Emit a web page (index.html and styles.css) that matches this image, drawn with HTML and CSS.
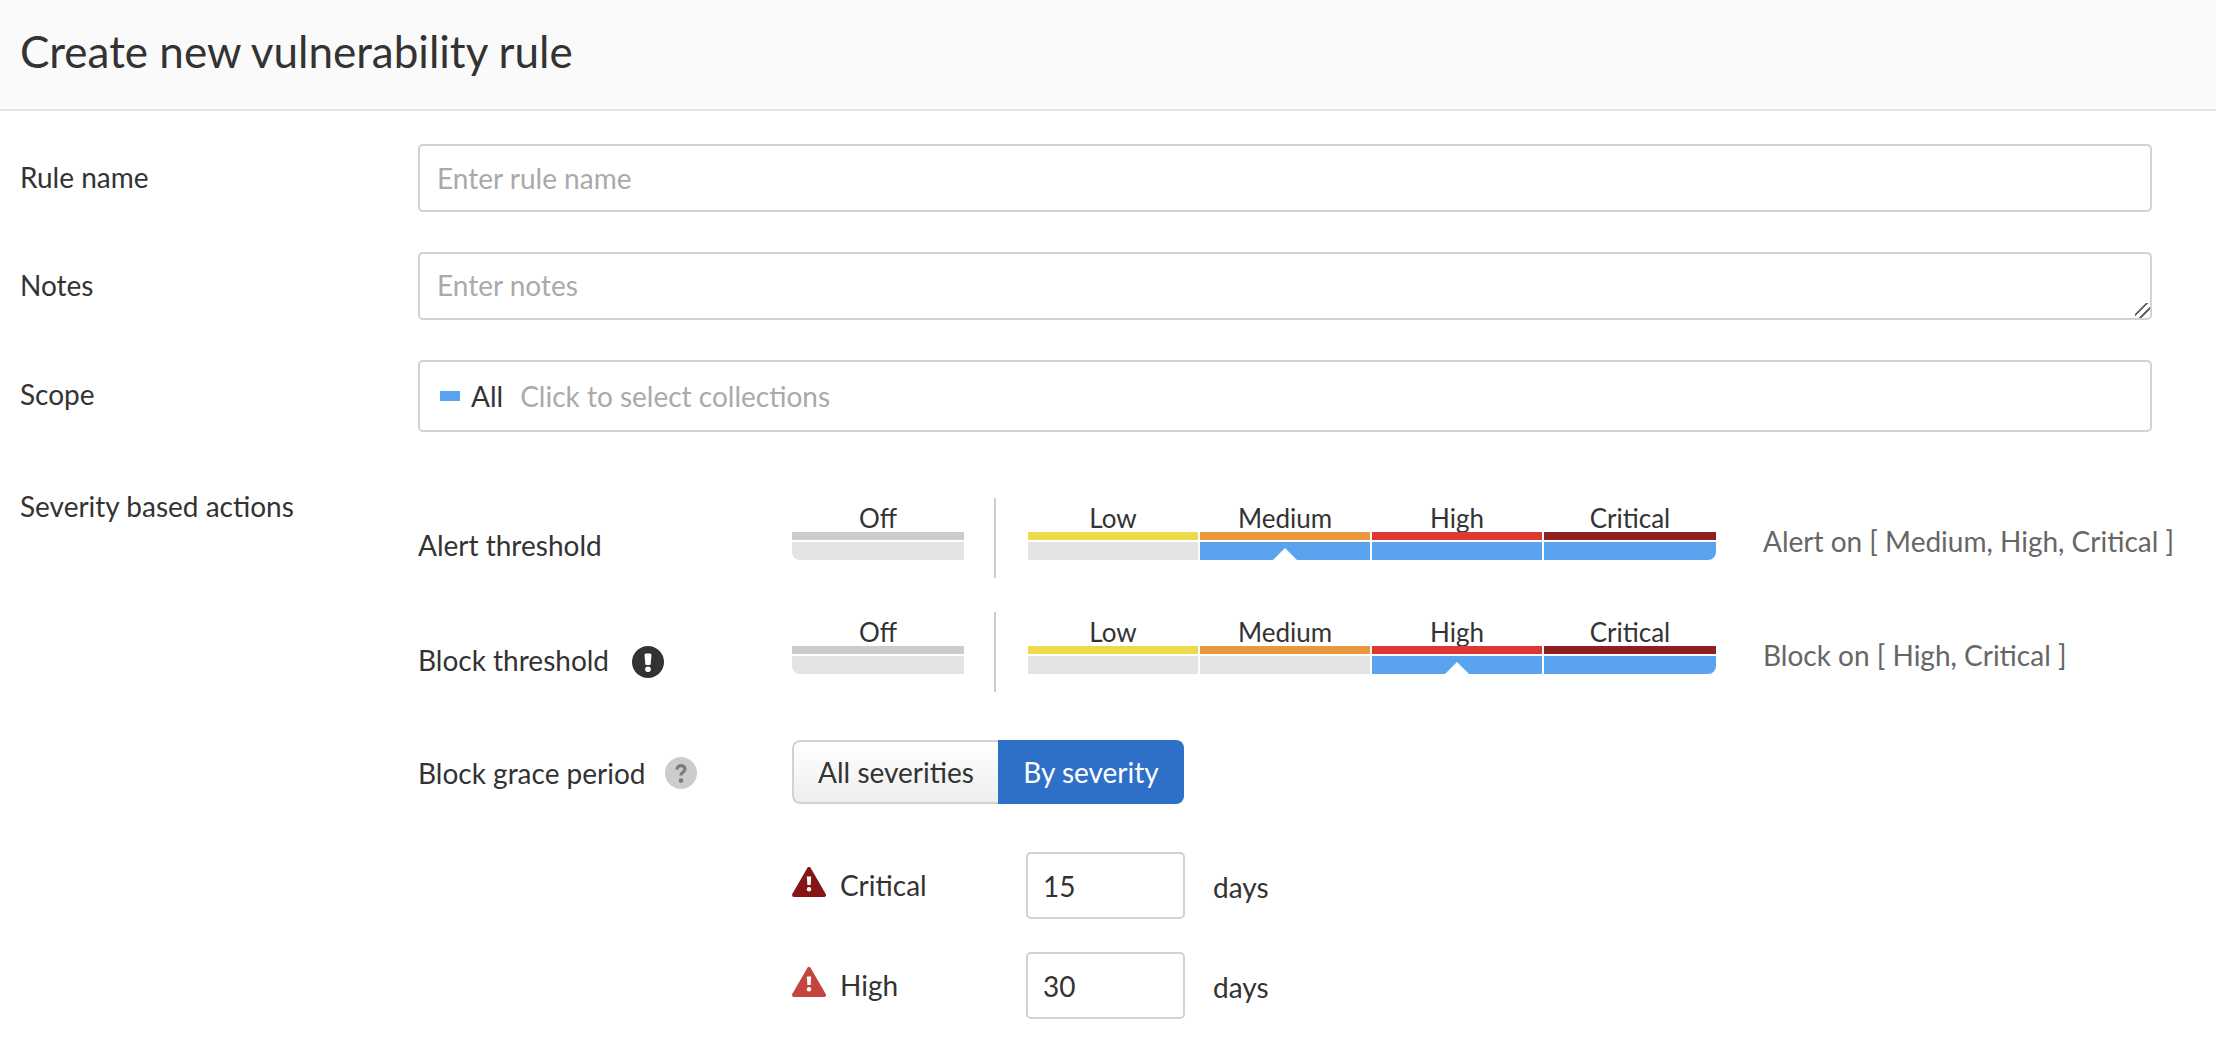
FILE: index.html
```html
<!DOCTYPE html>
<html lang="en">
<head>
<meta charset="utf-8">
<title>Create new vulnerability rule</title>
<link rel="stylesheet" href="styles.css">
</head>
<body>
<header class="page-header"><h1 class="page-title">Create new vulnerability rule</h1></header>
<main class="form">
  <div class="field">
    <label class="field-label">Rule name</label>
    <input class="text-input" type="text" placeholder="Enter rule name">
  </div>
  <div class="field">
    <label class="field-label">Notes</label>
    <textarea class="text-input text-area" placeholder="Enter notes"></textarea>
  </div>
  <div class="field">
    <label class="field-label field-label-scope">Scope</label>
    <div class="text-input scope-input">
      <span class="scope-swatch"></span><span class="scope-value">All</span><span class="scope-hint">Click to select collections</span>
    </div>
  </div>
  <div class="field severity">
    <div class="field-label severity-label">Severity based actions</div>
    <div class="severity-body">
      <div class="threshold">
        <div class="threshold-label threshold-label-alert">Alert threshold</div>
        <div class="scale scale-off">
          <div class="cell"><span class="cell-name">Off</span><span class="bar bar-off"></span><span class="state state-first"></span></div>
        </div>
        <div class="divider"></div>
        <div class="scale scale-levels">
          <div class="cell"><span class="cell-name">Low</span><span class="bar bar-low"></span><span class="state"></span></div>
          <div class="cell"><span class="cell-name">Medium</span><span class="bar bar-medium"></span><span class="state state-on state-marker"></span></div>
          <div class="cell"><span class="cell-name">High</span><span class="bar bar-high"></span><span class="state state-on"></span></div>
          <div class="cell"><span class="cell-name">Critical</span><span class="bar bar-critical"></span><span class="state state-on state-last"></span></div>
        </div>
        <div class="threshold-summary">Alert on [ Medium, High, Critical ]</div>
      </div>
      <div class="threshold">
        <div class="threshold-label threshold-label-block">Block threshold
          <svg class="icon-round icon-block" viewBox="0 0 32 32" aria-hidden="true"><circle cx="16" cy="16" r="16" fill="#333"/><path d="M12.500 9a1.500 1.500 0 0 1 1.500-1.500h4a1.500 1.500 0 0 1 1.500 1.500l-.8 9a1 1 0 0 1-1 1h-3.400a1 1 0 0 1-1-1z" fill="#fff"/><circle cx="16" cy="23.200" r="2.800" fill="#fff"/></svg>
        </div>
        <div class="scale scale-off">
          <div class="cell"><span class="cell-name">Off</span><span class="bar bar-off"></span><span class="state state-first"></span></div>
        </div>
        <div class="divider"></div>
        <div class="scale scale-levels">
          <div class="cell"><span class="cell-name">Low</span><span class="bar bar-low"></span><span class="state"></span></div>
          <div class="cell"><span class="cell-name">Medium</span><span class="bar bar-medium"></span><span class="state"></span></div>
          <div class="cell"><span class="cell-name">High</span><span class="bar bar-high"></span><span class="state state-on state-marker"></span></div>
          <div class="cell"><span class="cell-name">Critical</span><span class="bar bar-critical"></span><span class="state state-on state-last"></span></div>
        </div>
        <div class="threshold-summary">Block on [ High, Critical ]</div>
      </div>
      <div class="grace">
        <div class="grace-label">Block grace period
          <svg class="icon-round" viewBox="0 0 32 32" aria-hidden="true"><circle cx="16" cy="16" r="16" fill="#ccc"/><path d="M12 12.500c0-2.500 1.800-3.900 4-3.900s4 1.300 4 3.500c0 3-4 3-4 6.400" fill="none" stroke="#7c7c7c" stroke-width="3.200"/><circle cx="16" cy="23.600" r="2.300" fill="#7c7c7c"/></svg>
        </div>
        <div class="toggle">
          <span class="toggle-option">All severities</span>
          <span class="toggle-option toggle-active">By severity</span>
        </div>
      </div>
      <div class="days-row days-row-critical">
        <div class="days-name">
          <svg class="icon-tri" viewBox="0 0 34 30" aria-hidden="true"><path d="M17 2 32 28H2z" fill="#861616" stroke="#861616" stroke-width="4" stroke-linejoin="round"/><path d="M14.800 9.500h4.400l-.6 8.500h-3.200z" fill="#fff"/><circle cx="17" cy="22.200" r="2.200" fill="#fff"/></svg>
          <span>Critical</span>
        </div>
        <input class="text-input days-input" type="text" value="15">
        <span class="days-unit">days</span>
      </div>
      <div class="days-row">
        <div class="days-name">
          <svg class="icon-tri" viewBox="0 0 34 30" aria-hidden="true"><path d="M17 2 32 28H2z" fill="#c44440" stroke="#c44440" stroke-width="4" stroke-linejoin="round"/><path d="M14.800 9.500h4.400l-.6 8.500h-3.200z" fill="#fff"/><circle cx="17" cy="22.200" r="2.200" fill="#fff"/></svg>
          <span>High</span>
        </div>
        <input class="text-input days-input" type="text" value="30">
        <span class="days-unit">days</span>
      </div>
    </div>
  </div>
</main>
</body>
</html>
```

FILE: styles.css
```css
* { box-sizing: border-box; }
html, body { margin: 0; padding: 0; background: #fff; }
body {
  font-family: "Lato", "Liberation Sans", sans-serif;
  font-size: 28px;
  color: #333;
  overflow: hidden;
  height: 1058px;
}
.page-header {
  height: 111px;
  background: #fafafa;
  border-bottom: 2px solid #e4e4e4;
  padding-left: 20px;
  display: flex;
  align-items: center;
}
.page-title { margin: 0; font-size: 44px; font-weight: 400; line-height: 1; position: relative; top: -4px; }
.form { padding: 33px 64px 0 20px; display: flex; flex-direction: column; gap: 40px; }
.field { display: flex; align-items: center; }
.field-label { width: 398px; flex: none; padding-bottom: 2px; }
.field-label-scope { padding-bottom: 4px; }
.text-input {
  display: block;
  width: 100%;
  flex: 1;
  height: 68px;
  border: 2px solid #d2d2d2;
  border-radius: 5px;
  padding: 0 17px;
  font-family: inherit;
  font-size: 28px;
  color: #333;
  background: #fff;
  outline: none;
}
.text-input::placeholder { color: #aaa; opacity: 1; }
.text-area { resize: vertical; padding-top: 14px; line-height: 34px; }
.text-area::-webkit-resizer {
  background: linear-gradient(135deg, transparent 36%, #666 37%, #666 44%, transparent 45%, transparent 62%, #666 63%, #666 70%, transparent 71%);
}
.scope-input { height: 72px; display: flex; align-items: center; padding: 0 18px 0 20px; }
.scope-swatch { width: 20px; height: 10px; background: #5aa3ef; margin-right: 11px; }
.scope-value { margin-right: 17px; }
.scope-hint { color: #aaa; }
.severity { align-items: flex-start; }
.severity-label { padding-top: 16px; line-height: 36px; }
.severity-body { flex: 1; padding-top: 26px; }
.threshold { display: flex; height: 80px; margin-bottom: 34px; }
.threshold-label { width: 374px; flex: none; display: flex; align-items: center; line-height: 36px; height: 80px; }
.threshold-label-alert { padding-top: 14px; }
.threshold-label-block { padding-top: 16px; }
.scale { display: flex; gap: 2px; height: 62px; }
.scale-off { width: 172px; flex: none; }
.scale-levels { width: 688px; flex: none; }
.cell { flex: 170 1 0; display: flex; flex-direction: column; min-width: 0; }
.cell:last-child { flex-grow: 172; }
.scale-off .cell:last-child { flex-grow: 1; }
.cell-name { height: 34px; text-align: center; line-height: 40px; font-size: 26px; white-space: nowrap; }
.bar { display: block; height: 8px; margin-bottom: 2px; flex: none; }
.bar-off { background: #ccc; }
.bar-low { background: #ebdb4a; }
.bar-medium { background: #e9983e; }
.bar-high { background: #dd3831; }
.bar-critical { background: #8d2020; }
.state { display: block; height: 18px; background: #e4e4e4; flex: none; position: relative; }
.state-first { border-bottom-left-radius: 8px; }
.state-last { border-bottom-right-radius: 8px; }
.state-on { background: #5aa3ef; }
.state-marker::after {
  content: "";
  position: absolute;
  left: 50%;
  bottom: 0;
  margin-left: -12px;
  border-left: 12px solid transparent;
  border-right: 12px solid transparent;
  border-bottom: 12px solid #fff;
}
.divider { width: 2px; height: 80px; background: #ccc; margin: 0 32px 0 30px; flex: none; }
.threshold-summary { margin-left: 47px; color: #666; white-space: nowrap; line-height: 36px; padding-top: 25px; }
.icon-round { width: 32px; height: 32px; flex: none; margin-left: 19px; }
.icon-block { margin-left: 23px; margin-top: 4px; }
.grace { display: flex; align-items: center; height: 64px; margin-top: 48px; }
.grace-label { width: 374px; flex: none; display: flex; align-items: center; padding-top: 2px; }
.toggle {
  display: flex;
  width: 392px;
  height: 64px;
  border-radius: 8px;
  overflow: hidden;
  line-height: 60px;
}
.toggle-option { text-align: center; }
.toggle-option:first-child {
  width: 206px;
  border: 2px solid #d2d2d2;
  border-right: 0;
  border-radius: 8px 0 0 8px;
  background: linear-gradient(#fff, #eee);
}
.toggle-active { flex: 1; background: #2e6fc7; color: #fff; line-height: 64px; }
.days-row { display: flex; align-items: center; height: 67px; margin-top: 33px; padding-left: 374px; }
.days-row-critical { margin-top: 48px; }
.days-name { width: 234px; flex: none; display: flex; align-items: center; gap: 14px; padding-bottom: 2px; }
.icon-tri { width: 34px; height: 30px; flex: none; position: relative; top: -3px; }
.days-input { flex: none; width: 159px; height: 67px; padding: 0 15px; }
.days-unit { margin-left: 28px; padding-top: 2px; }
```
